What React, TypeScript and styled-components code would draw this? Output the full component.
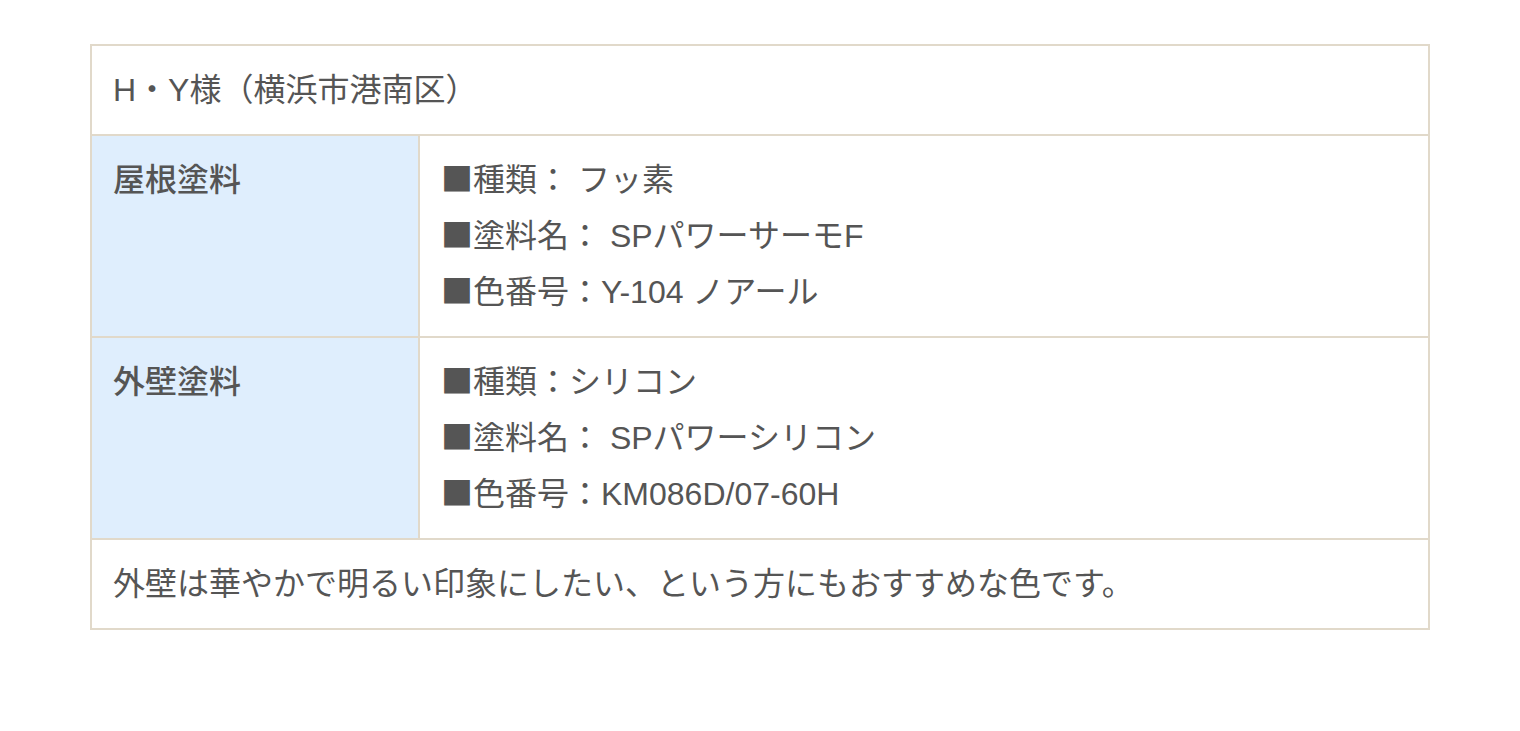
import React from "react";
import styled, { createGlobalStyle } from "styled-components";

const Global = createGlobalStyle`
  html, body { margin: 0; padding: 0; background: #ffffff; }
  body {
    font-family: "Liberation Sans", "Noto Sans CJK JP", sans-serif;
    color: #555555;
  }
`;

const Page = styled.div`
  padding: 44px 90px;
`;

const Table = styled.table`
  width: 1340px;
  border-collapse: collapse;
  border: 2px solid #e1d9ca;
  font-size: 32px;
  line-height: 56px;
`;

const Cell = styled.td<{ $label?: boolean }>`
  border: 2px solid #e1d9ca;
  padding: 16px 20px 16px 21px;
  vertical-align: top;
  text-align: left;
  background: ${(p) => (p.$label ? "#dfeefd" : "#ffffff")};
  font-weight: ${(p) => (p.$label ? 500 : 400)};
  width: ${(p) => (p.$label ? "285px" : "auto")};
  color: #555555;
`;

const Line = styled.div`
  white-space: nowrap;
  height: 56px;
`;

const Mark = styled.span`
  font-family: "Noto Sans CJK JP", sans-serif;
  line-height: 0;
`;

const rows = [
  {
    label: "屋根塗料",
    lines: ["種類： フッ素", "塗料名： SPパワーサーモF", "色番号：Y-104 ノアール"],
  },
  {
    label: "外壁塗料",
    lines: ["種類：シリコン", "塗料名： SPパワーシリコン", "色番号：KM086D/07-60H"],
  },
];

export default function App() {
  return (
    <>
      <Global />
      <Page>
        <Table>
          <tbody>
            <tr>
              <Cell colSpan={2}>H・Y様（横浜市港南区）</Cell>
            </tr>
            {rows.map((r) => (
              <tr key={r.label}>
                <Cell $label>{r.label}</Cell>
                <Cell>
                  {r.lines.map((l) => (
                    <Line key={l}>
                      <Mark>■</Mark>
                      {l}
                    </Line>
                  ))}
                </Cell>
              </tr>
            ))}
            <tr>
              <Cell colSpan={2}>外壁は華やかで明るい印象にしたい、という方にもおすすめな色です。</Cell>
            </tr>
          </tbody>
        </Table>
      </Page>
    </>
  );
}
